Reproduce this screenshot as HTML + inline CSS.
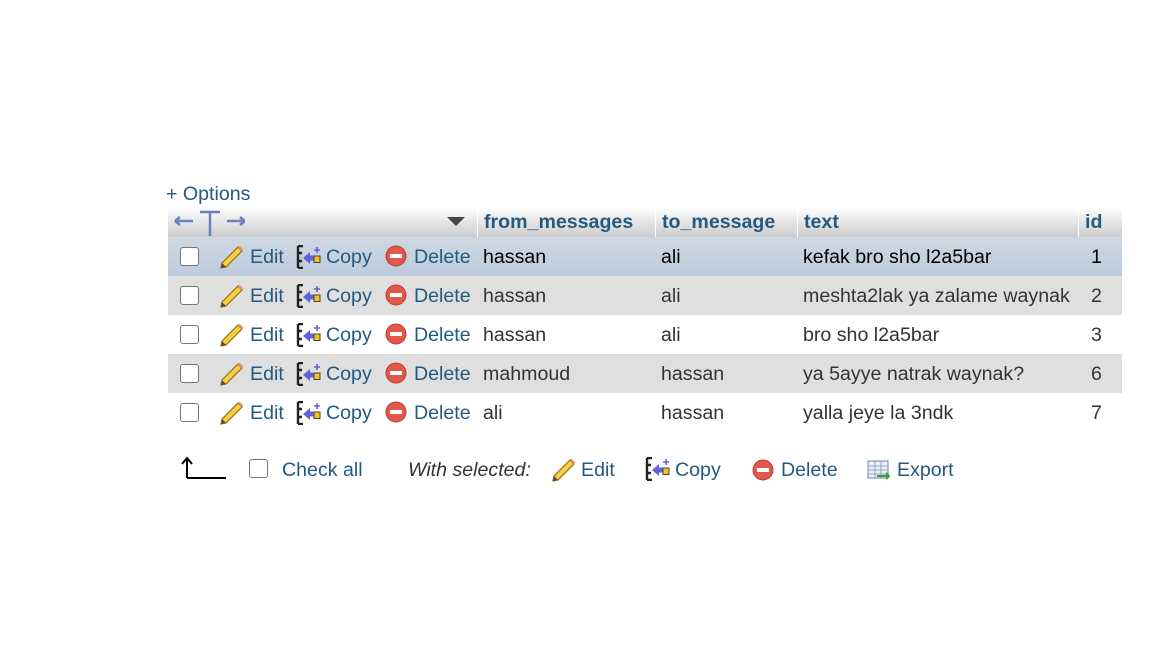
<!DOCTYPE html>
<html><head><meta charset="utf-8"><style>
body{margin:0;width:1152px;height:648px;background:#fff;font-family:"Liberation Sans",Arial,sans-serif;position:relative;overflow:hidden}
.a{position:absolute;white-space:nowrap}
.l{color:#235a81}
.row{position:absolute;left:168px;width:954px;height:39px;font-size:19.6px}
.row .a{top:9px}
.row svg.a{top:8px}
.cb{position:absolute;left:12px;top:10px;width:17px;height:17px;border:1px solid #767676;border-radius:3px;background:#fff}
.d{color:#333}
.hdr{position:absolute;left:168px;top:207px;width:954px;height:30px;background:linear-gradient(#fff,#ccc);font-size:19.6px;font-weight:bold;color:#235a81}
.sep{position:absolute;top:0;width:1px;height:30px;background:#fff}
.f{font-size:19.6px;top:459px}
</style></head><body>
<div class="a l" style="left:166px;top:183px;font-size:19.6px">+ Options</div>
<div class="hdr">
 <svg class="a" style="left:5px;top:2px" width="72" height="28"><path d="M2,12H20M2,12l5,-4M2,12l5,4M54,12H72M72,12l-5,-4M72,12l-5,4M27,3H47M37,3V27" stroke="#6c7fc0" stroke-width="2.5" fill="none"/></svg>
 <svg class="a" style="left:279px;top:10px" width="18" height="10"><polygon points="0,0 18,0 9,9" fill="#444"/></svg>
 <div class="sep" style="left:309px"></div>
 <div class="a" style="left:316px;top:4px">from_messages</div>
 <div class="sep" style="left:487px"></div>
 <div class="a" style="left:494px;top:4px">to_message</div>
 <div class="sep" style="left:629px"></div>
 <div class="a" style="left:636px;top:4px">text</div>
 <div class="sep" style="left:910px"></div>
 <div class="a" style="left:917px;top:4px">id</div>
</div>

<svg width="0" height="0" style="position:absolute">
<defs>
<g id="pen"><polygon points="2,18 1,23 6,22 22,6 18,2" fill="#f3cf45" stroke="#9a6a10" stroke-width="1.2"/><polygon points="1,23 2,18 6,22" fill="#5a4a30"/><polygon points="18,2 22,6 23.5,4.5 19.5,0.5" fill="#e89a7a"/></g>
<g id="cp"><path d="M2,1h5M2,1v22M2,23h5M2,8h4M2,16h4" stroke="#222" stroke-width="2.4" fill="none"/><polygon points="7,13 14,7 14,10.5 19,10.5 19,15.5 14,15.5 14,19" fill="#6262d8"/><rect x="18" y="11" width="6" height="6.5" fill="#f4c21a" stroke="#444" stroke-width="1"/><path d="M21,2v6M18,5h6" stroke="#6262d8" stroke-width="1.6"/></g>
<g id="dl"><circle cx="11" cy="11" r="10" fill="#e2574c" stroke="#c03c32"/><rect x="5" y="9" width="12" height="4" fill="#fff"/></g>
</defs></svg>

<div class="row" style="top:237px;background:linear-gradient(#ced8e3,#bccbdb)">
 <div class="cb"></div>
 <svg class="a" style="left:52px" width="24" height="24"><use href="#pen"/></svg><div class="a l" style="left:82px">Edit</div>
 <svg class="a" style="left:128px" width="26" height="24"><use href="#cp"/></svg><div class="a l" style="left:158px">Copy</div>
 <svg class="a" style="left:217px" width="22" height="22"><use href="#dl"/></svg><div class="a l" style="left:246px">Delete</div>
 <div class="a" style="left:315px;color:#000">hassan</div><div class="a" style="left:493px;color:#000">ali</div><div class="a" style="left:635px;color:#000">kefak bro sho l2a5bar</div><div class="a" style="left:923px;color:#000">1</div>
</div>
<div class="row" style="top:276px;background:#dfdfdf">
 <div class="cb"></div>
 <svg class="a" style="left:52px" width="24" height="24"><use href="#pen"/></svg><div class="a l" style="left:82px">Edit</div>
 <svg class="a" style="left:128px" width="26" height="24"><use href="#cp"/></svg><div class="a l" style="left:158px">Copy</div>
 <svg class="a" style="left:217px" width="22" height="22"><use href="#dl"/></svg><div class="a l" style="left:246px">Delete</div>
 <div class="a d" style="left:315px">hassan</div><div class="a d" style="left:493px">ali</div><div class="a d" style="left:635px">meshta2lak ya zalame waynak</div><div class="a d" style="left:923px">2</div>
</div>
<div class="row" style="top:315px;background:#fff">
 <div class="cb"></div>
 <svg class="a" style="left:52px" width="24" height="24"><use href="#pen"/></svg><div class="a l" style="left:82px">Edit</div>
 <svg class="a" style="left:128px" width="26" height="24"><use href="#cp"/></svg><div class="a l" style="left:158px">Copy</div>
 <svg class="a" style="left:217px" width="22" height="22"><use href="#dl"/></svg><div class="a l" style="left:246px">Delete</div>
 <div class="a d" style="left:315px">hassan</div><div class="a d" style="left:493px">ali</div><div class="a d" style="left:635px">bro sho l2a5bar</div><div class="a d" style="left:923px">3</div>
</div>
<div class="row" style="top:354px;background:#dfdfdf">
 <div class="cb"></div>
 <svg class="a" style="left:52px" width="24" height="24"><use href="#pen"/></svg><div class="a l" style="left:82px">Edit</div>
 <svg class="a" style="left:128px" width="26" height="24"><use href="#cp"/></svg><div class="a l" style="left:158px">Copy</div>
 <svg class="a" style="left:217px" width="22" height="22"><use href="#dl"/></svg><div class="a l" style="left:246px">Delete</div>
 <div class="a d" style="left:315px">mahmoud</div><div class="a d" style="left:493px">hassan</div><div class="a d" style="left:635px">ya 5ayye natrak waynak?</div><div class="a d" style="left:923px">6</div>
</div>
<div class="row" style="top:393px;background:#fff">
 <div class="cb"></div>
 <svg class="a" style="left:52px" width="24" height="24"><use href="#pen"/></svg><div class="a l" style="left:82px">Edit</div>
 <svg class="a" style="left:128px" width="26" height="24"><use href="#cp"/></svg><div class="a l" style="left:158px">Copy</div>
 <svg class="a" style="left:217px" width="22" height="22"><use href="#dl"/></svg><div class="a l" style="left:246px">Delete</div>
 <div class="a d" style="left:315px">ali</div><div class="a d" style="left:493px">hassan</div><div class="a d" style="left:635px">yalla jeye la 3ndk</div><div class="a d" style="left:923px">7</div>
</div>

<svg class="a" style="left:180px;top:456px" width="50" height="24"><path d="M7,22V3M2,8L7,2L12,8M7,22H46" stroke="#000" stroke-width="2" fill="none"/></svg>
<div class="a" style="left:249px;top:459px;width:17px;height:17px;border:1px solid #767676;border-radius:3px"></div>
<div class="a l f" style="left:282px">Check all</div>
<div class="a f" style="left:408px;font-style:italic;color:#333">With selected:</div>
<svg class="a" style="left:552px;top:458px" width="24" height="24"><use href="#pen"/></svg><div class="a l f" style="left:581px">Edit</div>
<svg class="a" style="left:645px;top:457px" width="26" height="24"><use href="#cp"/></svg><div class="a l f" style="left:675px">Copy</div>
<svg class="a" style="left:752px;top:459px" width="22" height="22"><use href="#dl"/></svg><div class="a l f" style="left:781px">Delete</div>
<svg class="a" style="left:867px;top:459px" width="24" height="22"><rect x="1" y="2" width="20" height="17" fill="#eef" stroke="#6a8aaa"/><path d="M1,7h20M1,11h20M1,15h20M8,2v17M14,2v17" stroke="#8ab" stroke-width="1"/><path d="M10,17h12M19,14l3,3l-3,3" stroke="#3a9a3a" stroke-width="2" fill="none"/></svg>
<div class="a l f" style="left:897px">Export</div>
</body></html>
